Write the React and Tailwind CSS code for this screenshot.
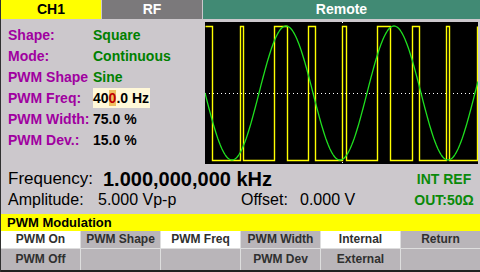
import React from 'react'

const W = 273
const H = 142
const MID = 71

// sine from the PWM shape, drawn in screen pixels
const sinePts = []
for (let x = 0; x <= W; x++) {
  const y = MID + 67 * Math.sin((2 * Math.PI * x) / 108)
  sinePts.push(`${x},${y.toFixed(1)}`)
}
const sinePath = 'M' + sinePts.join(' L')

// carrier pulses: [rise, fall]
const pulses = [
  [35, 38],
  [69, 82],
  [103, 110],
  [137, 141],
  [172, 185],
  [207, 214],
  [241, 244],
]
const HI = 4.5
const LO = 138.5
let sq = `M0.5,${HI} L7.5,${HI} L7.5,${LO}`
pulses.forEach(([r, f]) => {
  sq += ` L${r + 0.5},${LO} L${r + 0.5},${HI} L${f + 0.5},${HI} L${f + 0.5},${LO}`
})
sq += ` L272.5,${LO} L272.5,${HI}`

const rows = [
  { label: 'Shape:', value: 'Square', green: true },
  { label: 'Mode:', value: 'Continuous', green: true },
  { label: 'PWM Shape', value: 'Sine', green: true },
  { label: 'PWM Freq:', freq: true },
  { label: 'PWM Width:', value: '75.0 %' },
  { label: 'PWM Dev.:', value: '15.0 %' },
]

const softkeys = [
  { top: 'PWM On', topOn: true, bottom: 'PWM Off' },
  { top: 'PWM Shape', bottom: '' },
  { top: 'PWM Freq', topOn: true, bottom: '' },
  { top: 'PWM Width', bottom: 'PWM Dev' },
  { top: 'Internal', topOn: true, bottom: 'External' },
  { top: 'Return', bottom: '' },
]

function Waveform() {
  return (
    <div className="mt-[3px] h-[142px] w-[273px] bg-black">
      <svg width={W} height={H} viewBox={`0 0 ${W} ${H}`}>
        <line x1="0" y1="71.5" x2={W} y2="71.5" stroke="#ffffff" strokeWidth="1" strokeDasharray="1 3" />
        <line x1="137.5" y1="0" x2="137.5" y2={H} stroke="#ffffff" strokeWidth="1" strokeDasharray="1 3" />
        <path d={sq} fill="none" stroke="#ffff00" strokeWidth="1.4" />
        <path d={sinePath} fill="none" stroke="#1fe01f" strokeWidth="1.3" />
      </svg>
    </div>
  )
}

export default function App() {
  return (
    <div className="flex h-[272px] w-[480px] flex-col overflow-hidden border-l border-[#303030] bg-[#ccc8cc] font-['Liberation_Sans',Arial,sans-serif]">
      {/* tabs */}
      <div className="flex h-[19px] gap-px text-[14px] font-bold leading-[19px]">
        <div className="w-[100px] bg-[#ffff00] text-center text-black">CH1</div>
        <div className="w-[100px] bg-[#7b797b] text-center text-white">RF</div>
        <div className="flex-1 bg-[#418a74] text-center text-white">Remote</div>
      </div>

      {/* params + scope */}
      <div className="flex h-[147px]">
        <div className="w-[204px] pl-[7px] pt-[6px] text-[14px] font-bold leading-[21px]">
          {rows.map((r) => (
            <div key={r.label} className="flex">
              <span className="w-[85px] text-[#a000a0]">{r.label}</span>
              {r.freq ? (
                <span className="h-[20px] bg-[#fff8d8] pr-px text-black">
                  40<span className="bg-[#f0c060] text-[#c00000]">0</span>.0 Hz
                </span>
              ) : (
                <span className={r.green ? 'text-[#008000]' : 'text-black'}>{r.value}</span>
              )}
            </div>
          ))}
        </div>
        <Waveform />
      </div>

      {/* output info */}
      <div className="flex h-[48px] pt-[3px]">
        <div className="flex-1 pl-[7px] text-black">
          <div className="flex h-[20px] items-center text-[17px]">
            <span className="w-[95px]">Frequency:</span>
            <span className="text-[20px] font-bold">1.000,000,000 kHz</span>
          </div>
          <div className="flex h-[21px] items-center text-[16px]">
            <span className="w-[90px]">Amplitude:</span>
            <span className="w-[143px]">5.000 Vp-p</span>
            <span className="w-[59px]">Offset:</span>
            <span>0.000 V</span>
          </div>
        </div>
        <div className="w-[72px] text-center text-[14px] font-bold text-[#0a8a0a]">
          <div className="h-[20px] leading-[20px]">INT REF</div>
          <div className="h-[22px] leading-[22px]">OUT:50Ω</div>
        </div>
      </div>

      {/* menu title */}
      <div className="h-[17px] bg-[#ffff00] pl-[6px] text-[13px] font-bold leading-[17px] text-black">
        PWM Modulation
      </div>

      {/* softkeys */}
      <div className="grid h-[39px] grid-cols-6 gap-px bg-[#dedede] text-[12px] font-bold text-[#303030]">
        {softkeys.map((k) => (
          <div key={k.top} className="flex flex-col gap-px">
            <div className={`h-[17px] text-center leading-[17px] ${k.topOn ? 'bg-white' : 'bg-[#b9b5b9]'}`}>
              {k.top}
            </div>
            <div className="flex-1 bg-[#b9b5b9] text-center leading-[20px]">{k.bottom}</div>
          </div>
        ))}
      </div>
      <div className="h-[2px] bg-[#202020]" />
    </div>
  )
}
